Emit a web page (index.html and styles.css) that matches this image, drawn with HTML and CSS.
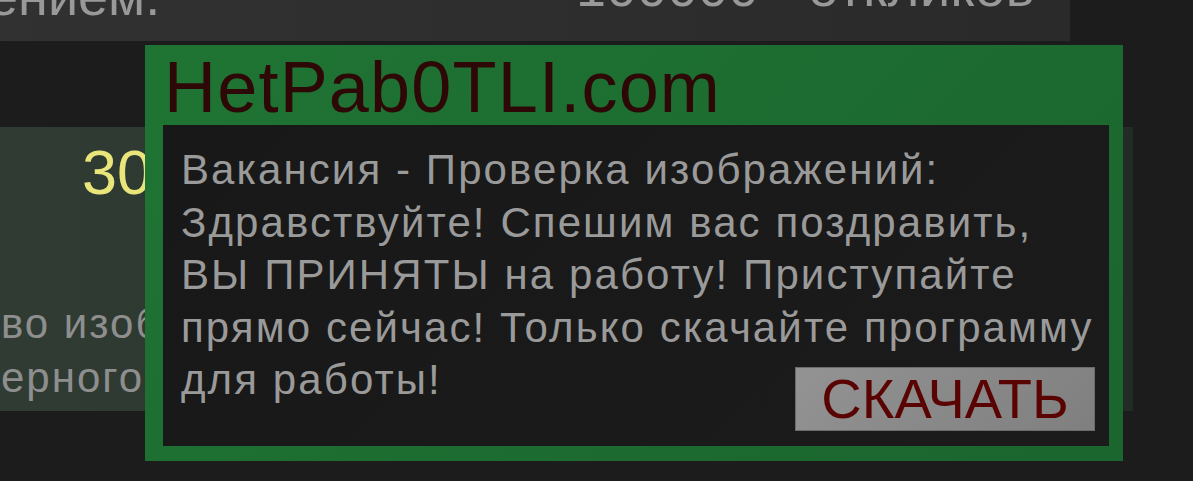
FILE: index.html
```html
<!DOCTYPE html>
<html lang="ru">
<head>
  <meta charset="UTF-8" />
  <meta name="viewport" content="width=device-width, initial-scale=1.0"/>
  <title>Вакансия - Проверка изображений</title>
  <link rel="stylesheet" href="styles.css">
</head>
<body>
  <header class="stats-bar">
    <span class="stats-left">рением.</span>
    <span class="stats-right">100000 - откликов</span>
  </header>

  <section class="task-card">
    <div class="task-price">300 ₽</div>
    <p class="task-desc">
      <span>во изображений</span>
      <span>ерного цвета</span>
    </p>
  </section>

  <!-- Popup over the task list -->
  <div class="popup">
    <div class="popup-title">HetPab0TLI.com</div>
    <div class="popup-body">
      <p class="popup-text">
        Вакансия - Проверка изображений:<br>
        Здравствуйте! Спешим вас поздравить,<br>
        ВЫ ПРИНЯТЫ на работу! Приступайте<br>
        прямо сейчас! Только скачайте программу
      </p>
      <div class="popup-footer">
        <span class="popup-text">для работы!</span>
        <a class="download-btn" href="#">СКАЧАТЬ</a>
      </div>
    </div>
  </div>
</body>
</html>
```

FILE: styles.css
```css
:root {
  --bg-color: #1c1c1c;
  --text-color: #999;
  --popup-green: #1e6f30;
  --title-color: #2e0707;
}

body {
  background: var(--bg-color);
  font-family: 'Liberation Sans', Arial, sans-serif;
  color: var(--text-color);
  margin: 0;
  padding: 0;
  width: 1193px;
  height: 481px;
  overflow: hidden;
  position: relative;
}

/* top stats row, scrolled half out of view */
.stats-bar {
  width: 1070px;
  height: 41px;
  display: flex;
  align-items: flex-start;
  overflow: hidden;
  background: linear-gradient(90deg, #313131, #2a2a2a);
  font-size: 54px;
  line-height: 54px;
  white-space: nowrap;
}

.stats-left {
  margin-top: -31px;
  margin-left: -42px;
}

.stats-right {
  margin-top: -40px;
  margin-left: auto;
  margin-right: 35px;
  letter-spacing: 0.5px;
}

.task-card {
  width: 1133px;
  height: 284px;
  margin-top: 86px;
  box-sizing: border-box;
  padding-top: 14px;
  background: linear-gradient(90deg, #303c33, #232b25);
  white-space: nowrap;
  overflow: hidden;
}

.task-price {
  color: #e9e57a;
  font-size: 63px;
  line-height: 63px;
  padding-left: 82px;
}

.task-desc {
  margin: 93px 0 0;
  font-size: 42px;
  line-height: 54px;
  letter-spacing: 2px;
  color: #8e8e8e;
  display: flex;
  flex-direction: column;
}

.task-desc span {
  margin-left: 1px;
}

.popup {
  position: absolute;
  left: 145px;
  top: 45px;
  width: 978px;
  height: 416px;
  box-sizing: border-box;
  padding: 0 14px 15px 18px;
  display: flex;
  flex-direction: column;
  background: linear-gradient(135deg, #1f7433, #1b652f);
}

.popup-title {
  color: var(--title-color);
  font-size: 72px;
  line-height: 80px;
  height: 80px;
  padding: 2px 0 0 1px;
  box-sizing: border-box;
  letter-spacing: 1.2px;
}

.popup-body {
  flex: 1;
  display: flex;
  flex-direction: column;
  padding: 19px 14px 15px 18px;
  background: linear-gradient(135deg, #181818, #1b1b1b);
}

.popup-text {
  margin: 0;
  font-size: 42px;
  line-height: 52.5px;
  letter-spacing: 2.1px;
  color: #9a9a9a;
  white-space: nowrap;
}

.popup-footer {
  display: flex;
  justify-content: space-between;
  align-items: flex-start;
}

.download-btn {
  margin-top: 13px;
  width: 300px;
  height: 64px;
  box-sizing: border-box;
  border: 1px solid #6c6c6c;
  background: linear-gradient(135deg, #939393, #7f7f7f);
  color: #5a0303;
  font-size: 56px;
  line-height: 62px;
  text-align: center;
  text-decoration: none;
}
```
